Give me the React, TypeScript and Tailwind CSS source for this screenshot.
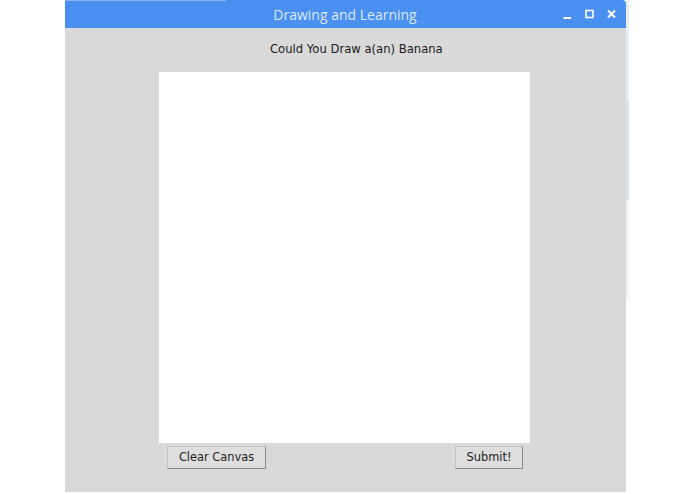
import React from "react";

export default function App() {
  return (
    <div className="w-[695px] h-[494px] bg-white flex overflow-hidden" style={{ fontFamily: '"DejaVu Sans", sans-serif' }}>
      <div className="w-[65px] shrink-0" />
      <div className="w-[561px] h-[492px] flex flex-col shrink-0">
        <div className="h-[28px] bg-[#4a90f0] rounded-tr-[4px] flex items-center relative">
          <div className="absolute left-0 top-0 w-[161px] h-[1px] bg-[#8ab6f0]" />
          <div className="flex-1 text-center text-[14px] text-[#dde8fb] pr-[1px]" style={{ fontFamily: '"Open Sans", sans-serif' }}>
            Drawing and Learning
          </div>
          <div className="absolute right-[10px] top-[9px] flex items-center gap-[13px] text-white">
            <svg width="9" height="10" viewBox="0 0 9 10"><rect x="0.5" y="8" width="7.5" height="2" fill="#fff" /></svg>
            <svg width="9" height="10" viewBox="0 0 9 10"><rect x="1" y="1.5" width="7" height="7" fill="none" stroke="#fff" strokeWidth="1.6" /></svg>
            <svg width="9" height="10" viewBox="0 0 9 10"><path d="M1 1.5 L8 8.5 M8 1.5 L1 8.5" stroke="#fff" strokeWidth="2" /></svg>
          </div>
        </div>
        <div className="flex-1 bg-[#d9d9d9] flex flex-col">
          <div className="h-[44px] flex items-center pl-[205px] text-[11.6px] text-[#1a1a1a]">
            Could You Draw a(an) Banana
          </div>
          <div className="ml-[94px] w-[371px] h-[371px] bg-white" />
          <div className="ml-[102px] w-[356px] flex justify-between mt-[3px]">
            <button className="w-[99px] h-[23px] bg-[#dedede] border border-[#c4c4c4] border-r-[#8a8a8a] border-b-[#8a8a8a] text-[11.4px] text-[#222] flex items-center justify-center">
              Clear Canvas
            </button>
            <button className="w-[68px] h-[23px] bg-[#dedede] border border-[#c4c4c4] border-r-[#8a8a8a] border-b-[#8a8a8a] text-[11.4px] text-[#222] flex items-center justify-center">
              Submit!
            </button>
          </div>
        </div>
      </div>
      <div className="w-[3px] h-[494px] flex flex-col shrink-0">
        <div className="h-[100px] bg-[#e8eef4]" />
        <div className="h-[100px] bg-[#dde4ec]" />
        <div className="h-[100px] bg-[#f3f3f3]" />
        <div className="flex-1 bg-white" />
      </div>
    </div>
  );
}
